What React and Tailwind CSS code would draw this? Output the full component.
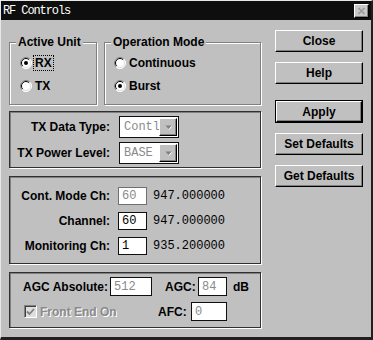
import React from "react";

function Radio({ checked }) {
  return (
    <svg width="12" height="12" viewBox="0 0 12 12" className="shrink-0">
      <circle cx="6" cy="6" r="5.5" fill="#fff" />
      <path d="M2.11 9.89 A5.5 5.5 0 0 1 9.89 2.11" stroke="#808080" fill="none" />
      <path d="M2.8 9.2 A4.5 4.5 0 0 1 9.2 2.8" stroke="#000" fill="none" />
      <path d="M9.89 2.11 A5.5 5.5 0 0 1 2.11 9.89" stroke="#fff" fill="none" />
      <path d="M9.2 2.8 A4.5 4.5 0 0 1 2.8 9.2" stroke="#dcdcdc" fill="none" />
      {checked && <circle cx="6" cy="6" r="2" fill="#000" />}
    </svg>
  );
}

function Button({ children, def }) {
  const inner = (
    <div className="h-full w-full bg-[#c0c0c0] border-t border-l border-t-white border-l-white border-r border-b border-r-black border-b-black shadow-[inset_-1px_-1px_0_#808080] flex items-center justify-center text-[12px] font-bold text-black">
      {children}
    </div>
  );
  if (def) {
    return <div className="w-[88px] h-[23px] border border-black">{inner}</div>;
  }
  return <div className="w-[88px] h-[22px]">{inner}</div>;
}

function Group({ label, className, children }) {
  return (
    <div
      className={
        "relative border border-[#808080] shadow-[inset_1px_1px_0_#fff,1px_1px_0_#fff] " +
        (className || "")
      }
    >
      {label && (
        <span className="absolute -top-[8px] left-[6px] bg-[#c0c0c0] px-[2px] text-[12px] leading-[14px] font-bold text-black">
          {label}
        </span>
      )}
      {children}
    </div>
  );
}

function Frame({ className, children }) {
  return (
    <div
      className={
        "border border-[#303030] shadow-[inset_1px_1px_0_#808080,1px_1px_0_#fff] " +
        (className || "")
      }
    >
      {children}
    </div>
  );
}

function Input({ value, w, h, gray, lightBorder }) {
  return (
    <div
      className={
        "bg-white flex items-center pl-[3px] font-['Liberation_Mono',monospace] text-[12px] border " +
        (lightBorder ? "border-[#707070] " : "border-[#101010] ") +
        (gray ? "text-[#8a8a8a] " : "text-black ") +
        w +
        " " +
        h
      }
    >
      {value}
    </div>
  );
}

function Combo({ value }) {
  return (
    <div className="w-[60px] h-[22px] border border-[#101010] bg-white flex items-center pr-[1px]">
      <span className="flex-1 min-w-0 overflow-hidden pl-[4px] font-['Liberation_Mono',monospace] text-[12px] text-[#8a8a8a] whitespace-nowrap">
        {value}
      </span>
      <div className="shrink-0 w-[18px] h-[18px] bg-[#c0c0c0] border-t border-l border-t-white border-l-white border-r border-b border-r-black border-b-black shadow-[inset_-1px_-1px_0_#808080] flex items-center justify-center">
        <svg width="7" height="5" viewBox="0 0 7 5">
          <path d="M0.5 0.5 L6.5 0.5 L3.5 4 Z" fill="#808080" />
          <path d="M4 4.5 L6.5 1.5" stroke="#fff" strokeWidth="1" />
        </svg>
      </div>
    </div>
  );
}

export default function App() {
  return (
    <div className="w-[373px] h-[340px] bg-[#c0c0c0] border-l border-t border-l-[#e8e8e8] border-t-[#e8e8e8] border-r-2 border-b-[3px] border-r-[#202020] border-b-[#202020] font-['Liberation_Sans',Arial,sans-serif] text-black flex flex-col overflow-hidden">
      {/* Title bar */}
      <div className="h-[19px] bg-[#0e0e0e] flex items-center justify-between pl-[2px] pr-[2px]">
        <span className="text-white font-['Liberation_Mono',monospace] text-[12px] tracking-[-1.1px] leading-none">
          RF Controls
        </span>
        <div className="w-[15px] h-[14px] bg-[#c8c8c8] border-t border-l border-t-white border-l-white border-r border-b border-r-black border-b-black shadow-[inset_-1px_-1px_0_#808080] flex items-center justify-center">
          <svg width="9" height="8" viewBox="0 0 9 8">
            <path d="M1.5 1 L7.5 7 M7.5 1 L1.5 7" stroke="#9a9a9a" strokeWidth="1.6" />
          </svg>
        </div>
      </div>

      {/* Body */}
      <div className="flex pl-[8px]">
        {/* Left column */}
        <div className="w-[252px] flex flex-col">
          <div className="flex gap-[7px] mt-[22px]">
            <Group label="Active Unit" className="w-[88px] h-[63px]">
              <div className="flex flex-col gap-[7px] pt-[12px] pl-[10px]">
                <div className="flex items-center h-[16px] gap-[2px]">
                  <Radio checked />
                  <span className="text-[12px] font-bold px-[1px] leading-[14px] outline outline-1 outline-dotted outline-black">
                    RX
                  </span>
                </div>
                <div className="flex items-center h-[16px] gap-[2px]">
                  <Radio />
                  <span className="text-[12px] font-bold px-[1px]">TX</span>
                </div>
              </div>
            </Group>
            <Group label="Operation Mode" className="w-[157px] h-[63px]">
              <div className="flex flex-col gap-[7px] pt-[12px] pl-[9px]">
                <div className="flex items-center h-[16px] gap-[3px]">
                  <Radio />
                  <span className="text-[12px] font-bold">Continuous</span>
                </div>
                <div className="flex items-center h-[16px] gap-[3px]">
                  <Radio checked />
                  <span className="text-[12px] font-bold">Burst</span>
                </div>
              </div>
            </Group>
          </div>

          <Frame className="mt-[6px] h-[57px] flex flex-col gap-[4px] pt-[4px]">
            <div className="flex items-center">
              <span className="w-[101px] text-right text-[12px] font-bold pr-[1px]">TX Data Type:</span>
              <div className="ml-[8px]">
                <Combo value="Contl" />
              </div>
            </div>
            <div className="flex items-center">
              <span className="w-[101px] text-right text-[12px] font-bold pr-[1px]">TX Power Level:</span>
              <div className="ml-[8px]">
                <Combo value="BASE" />
              </div>
            </div>
          </Frame>

          <Frame className="mt-[8px] h-[88px] flex flex-col gap-[7px] pt-[10px]">
            {[
              ["Cont. Mode Ch:", "60", "947.000000", true],
              ["Channel:", "60", "947.000000", false],
              ["Monitoring Ch:", "1", "935.200000", false],
            ].map(([l, v, f, g]) => (
              <div key={l} className="flex items-center h-[18px]">
                <span className="w-[100px] text-right text-[12px] font-bold">{l}</span>
                <div className="ml-[8px]">
                  <Input value={v} w="w-[29px]" h="h-[18px]" gray={g} lightBorder={g} />
                </div>
                <span className="ml-[6px] font-['Liberation_Mono',monospace] text-[12px]">{f}</span>
              </div>
            ))}
          </Frame>

          <Frame className="mt-[8px] h-[56px] flex flex-col gap-[6px] pt-[4px]">
            <div className="flex items-center h-[19px]">
              <span className="w-[98px] text-right text-[12px] font-bold">AGC Absolute:</span>
              <div className="ml-[2px]">
                <Input value="512" w="w-[42px]" h="h-[19px]" gray />
              </div>
              <span className="ml-[13px] w-[33px] text-[12px] font-bold">AGC:</span>
              <Input value="84" w="w-[29px]" h="h-[19px]" gray />
              <span className="ml-[6px] text-[12px] font-bold">dB</span>
            </div>
            <div className="flex items-center h-[19px]">
              <div className="ml-[14px] w-[13px] h-[13px] bg-[#dedede] border-t border-l border-t-[#808080] border-l-[#808080] border-r border-b border-r-white border-b-white shadow-[inset_1px_1px_0_#404040] flex items-center justify-center">
                <svg width="9" height="8" viewBox="0 0 9 8">
                  <path d="M1 3.5 L3.5 6 L8 1" stroke="#808080" strokeWidth="1.8" fill="none" />
                </svg>
              </div>
              <span className="ml-[3px] w-[118px] text-[12px] font-bold text-[#8a8a8a] [text-shadow:1px_1px_0_#fff]">
                Front End On
              </span>
              <span className="w-[33px] text-[12px] font-bold">AFC:</span>
              <Input value="0" w="w-[36px]" h="h-[19px]" gray />
            </div>
          </Frame>
        </div>

        {/* Right column */}
        <div className="ml-[14px] flex flex-col mt-[10px]">
          <Button>Close</Button>
          <div className="mt-[10px]">
            <Button>Help</Button>
          </div>
          <div className="mt-[16px]">
            <Button def>Apply</Button>
          </div>
          <div className="mt-[10px]">
            <Button>Set Defaults</Button>
          </div>
          <div className="mt-[10px]">
            <Button>Get Defaults</Button>
          </div>
        </div>
      </div>
    </div>
  );
}
